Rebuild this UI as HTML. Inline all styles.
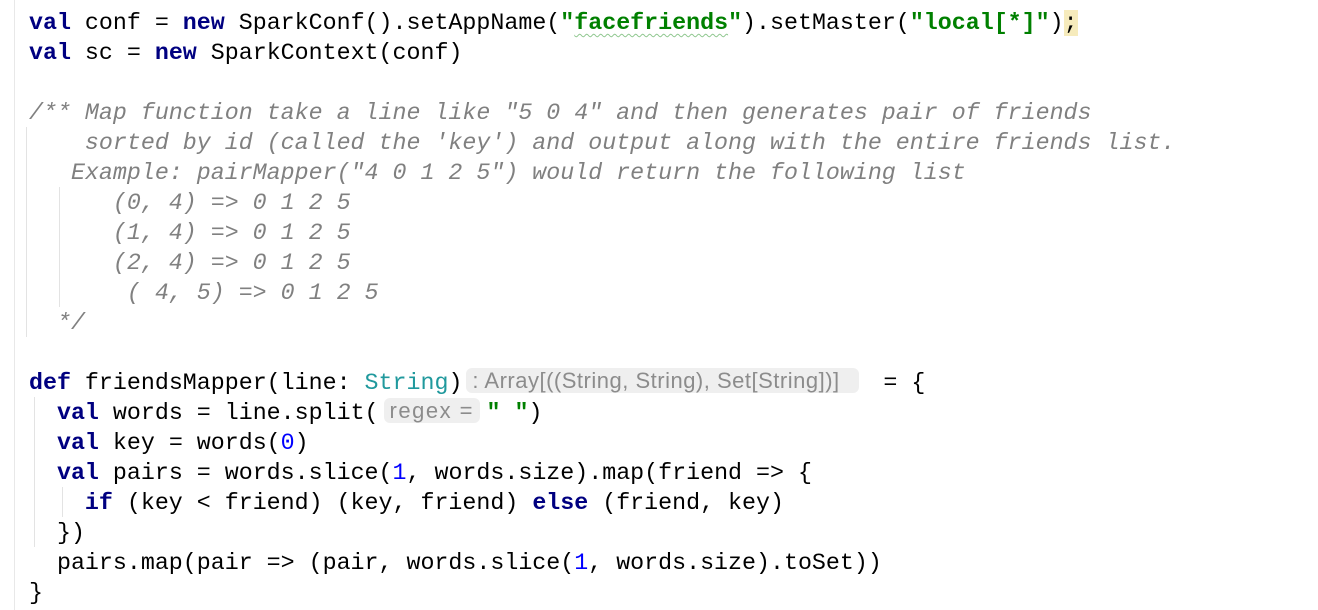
<!DOCTYPE html>
<html><head><meta charset="utf-8"><style>
html,body{margin:0;padding:0;background:#fff;width:1318px;height:610px;overflow:hidden}
.gut{position:absolute;left:14px;top:0;width:1px;height:610px;background:#e8e8e8}
.code{position:absolute;left:29px;top:8px;font-family:"Liberation Mono",monospace;font-size:23.3px;color:#000}
.l{height:30px;line-height:30px;white-space:pre}
.k{color:#000080;font-weight:bold}
.s{color:#008000;font-weight:bold}
.c{color:#808080;font-style:italic}
.t{color:#20999d}
.n{color:#0000ff}
.w{text-decoration:underline wavy #8fc78f;text-decoration-thickness:1px;text-underline-offset:4px}
.semi{background:#f6ebbc}
.hint{display:inline-block;box-sizing:border-box;font-family:"Liberation Sans",sans-serif;font-size:22px;color:#8c8c8c;background:#efefef;border-radius:6px;padding:0 6px;line-height:25px;vertical-align:1px;white-space:nowrap;letter-spacing:0.5px}
.g{position:absolute;width:1px;background:#e3e3e3}
</style></head><body>
<div class="gut"></div>
<div class="g" style="left:26px;top:127px;height:210px"></div>
<div class="g" style="left:59px;top:187px;height:120px"></div>
<div class="g" style="left:34px;top:397px;height:150px"></div>
<div class="g" style="left:62px;top:487px;height:30px"></div>
<div class="code"><div class="l"><span class="k">val</span> conf = <span class="k">new</span> SparkConf().setAppName(<span class="s">"<span class="w">facefriends</span>"</span>).setMaster(<span class="s">"local[*]"</span>)<span class="semi">;</span></div><div class="l"><span class="k">val</span> sc = <span class="k">new</span> SparkContext(conf)</div><div class="l"> </div><div class="l c">/** Map function take a line like "5 0 4" and then generates pair of friends</div><div class="l c">    sorted by id (called the 'key') and output along with the entire friends list.</div><div class="l c">   Example: pairMapper("4 0 1 2 5") would return the following list</div><div class="l c">      (0, 4) =&gt; 0 1 2 5</div><div class="l c">      (1, 4) =&gt; 0 1 2 5</div><div class="l c">      (2, 4) =&gt; 0 1 2 5</div><div class="l c">       ( 4, 5) =&gt; 0 1 2 5</div><div class="l c">  */</div><div class="l"> </div><div class="l"><span class="k">def</span> friendsMapper(line: <span class="t">String</span>)<span class="hint" style="width:393px;margin-left:4px;margin-right:24px">: Array[((String, String), Set[String])]</span>= {</div><div class="l">  <span class="k">val</span> words = line.split(<span class="hint" style="width:96px;margin-left:5px;margin-right:7px;letter-spacing:1.5px">regex =</span><span class="s">" "</span>)</div><div class="l">  <span class="k">val</span> key = words(<span class="n">0</span>)</div><div class="l">  <span class="k">val</span> pairs = words.slice(<span class="n">1</span>, words.size).map(friend =&gt; {</div><div class="l">    <span class="k">if</span> (key &lt; friend) (key, friend) <span class="k">else</span> (friend, key)</div><div class="l">  })</div><div class="l">  pairs.map(pair =&gt; (pair, words.slice(<span class="n">1</span>, words.size).toSet))</div><div class="l">}</div></div>
</body></html>
